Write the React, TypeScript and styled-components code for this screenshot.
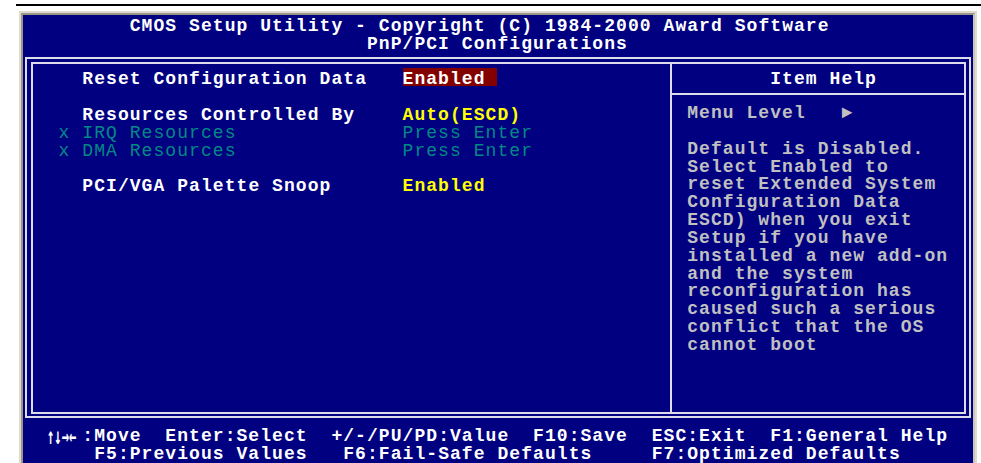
import React from "react"
import styled, { createGlobalStyle } from "styled-components"

// 80x25 text-mode grid
const CELL = 11.86
const ROW = 17.84
const cols = (n: number) => `${(n * CELL).toFixed(2)}px`

const GlobalStyle = createGlobalStyle`
  html, body {
    margin: 0;
    padding: 0;
    background: #ffffff;
  }
`

const Page = styled.div`
  width: 981px;
  height: 463px;
  padding-top: 4px;
  box-sizing: border-box;
  overflow: hidden;
  background: #ffffff;
`

const Rule = styled.div`
  margin-left: 16px;
  height: 2px;
  background: #000000;
`

const Bezel = styled.div`
  margin: 5px 0 0 19px;
  width: 958px;
  height: 460px;
  box-sizing: border-box;
  border-style: solid;
  border-width: 2px 2px 0 2px;
  border-color: #dedacd;
`

// the taller line box drops glyphs onto the middle of each text row
const Screen = styled.div`
  height: 100%;
  box-sizing: border-box;
  border-style: solid;
  border-width: 2px 2px 0 2px;
  border-color: #9a9687 #c9c6bb #9a9687 #9a9687;
  background: #000080;
  display: flex;
  flex-direction: column;
  color: #ffffff;
  font-family: "Liberation Mono", "DejaVu Sans Mono", monospace;
  font-size: 18px;
  font-weight: 700;
  letter-spacing: 1.06px;
  line-height: ${ROW + 5}px;
  white-space: pre;
`

const Header = styled.header`
  display: flex;
  flex-direction: column;
`

const TextLine = styled.div<{ $indent?: number }>`
  height: ${ROW}px;
  padding-left: ${(p) => cols(p.$indent ?? 0)};
`

const Frame = styled.section`
  margin: 6.3px 2px 7.3px 2px;
  height: 361px;
  box-sizing: border-box;
  border: 2px solid #dcdcec;
  padding: 3px 3px 2px 4px;
`

const InnerFrame = styled.div`
  height: 100%;
  box-sizing: border-box;
  border: 2px solid #dcdcec;
  display: flex;
`

const MenuPane = styled.div`
  width: 637px;
  flex: none;
  padding: 4.5px 0 0 25.6px;
  box-sizing: border-box;
  display: flex;
  flex-direction: column;
`

const MenuRow = styled.div`
  height: ${ROW}px;
  display: grid;
  grid-template-columns: ${cols(2)} ${cols(27)} auto;
  align-items: start;
`

type Tone = "white" | "yellow" | "teal" | "selected"

const toneColor: Record<Tone, string> = {
  white: "#ffffff",
  yellow: "#ffff00",
  teal: "#008a84",
  selected: "#ffffff",
}

const Cell = styled.span<{ $tone: Tone }>`
  color: ${(p) => toneColor[p.$tone]};
  font-weight: ${(p) => (p.$tone === "teal" ? 400 : 700)};
  height: ${ROW}px;
`

const Value = styled(Cell)`
  justify-self: start;
  width: ${(p) => (p.$tone === "selected" ? cols(8) : "auto")};
  background: ${(p) => (p.$tone === "selected" ? "#840000" : "transparent")};
`

const HelpPane = styled.aside`
  flex: 1;
  border-left: 2px solid #dcdcec;
  display: flex;
  flex-direction: column;
  color: #c0c0c0;
`

const HelpTitle = styled.div`
  height: 31px;
  padding: 4.5px 0 0 ${(15.2 + 7 * CELL).toFixed(2)}px;
  box-sizing: border-box;
  border-bottom: 2px solid #dcdcec;
  color: #ffffff;
`

const HelpBody = styled.div`
  padding: 7.2px 0 0 15.2px;
  display: flex;
  flex-direction: column;
`

const Footer = styled.footer`
  display: flex;
  flex-direction: column;
`

// cursor keys are drawn tall and narrow, squeezed into four cells
const ArrowCell = styled.span`
  display: inline-block;
  width: ${cols(4)};
  padding-left: 12px;
  box-sizing: border-box;
  vertical-align: top;
`

const Arrows = styled.span`
  display: inline-block;
  font-family: "DejaVu Sans Mono", monospace;
  font-size: 21px;
  letter-spacing: 0;
  transform: scale(0.58, 1.1);
  transform-origin: left center;
`

type Item = {
  label: string
  value: string
  state: "selected" | "normal" | "locked"
}

const items: (Item | null)[] = [
  { label: "Reset Configuration Data", value: "Enabled", state: "selected" },
  null,
  { label: "Resources Controlled By", value: "Auto(ESCD)", state: "normal" },
  { label: "IRQ Resources", value: "Press Enter", state: "locked" },
  { label: "DMA Resources", value: "Press Enter", state: "locked" },
  null,
  { label: "PCI/VGA Palette Snoop", value: "Enabled", state: "normal" },
]

const helpText = [
  "Menu Level   \u25BA",
  "",
  "Default is Disabled.",
  "Select Enabled to",
  "reset Extended System",
  "Configuration Data",
  "ESCD) when you exit",
  "Setup if you have",
  "installed a new add-on",
  "and the system",
  "reconfiguration has",
  "caused such a serious",
  "conflict that the OS",
  "cannot boot",
]

function MenuItem({ item }: { item: Item | null }) {
  if (!item) return <MenuRow />
  const locked = item.state === "locked"
  const valueTone: Tone = locked ? "teal" : item.state === "selected" ? "selected" : "yellow"
  return (
    <MenuRow>
      <Cell $tone="teal">{locked ? "x" : ""}</Cell>
      <Cell $tone={locked ? "teal" : "white"}>{item.label}</Cell>
      <Value $tone={valueTone}>{item.value}</Value>
    </MenuRow>
  )
}

export default function App() {
  return (
    <>
      <GlobalStyle />
      <Page>
        <Rule />
        <Bezel>
          <Screen>
            <Header>
              <TextLine $indent={9}>CMOS Setup Utility - Copyright (C) 1984-2000 Award Software</TextLine>
              <TextLine $indent={29}>PnP/PCI Configurations</TextLine>
            </Header>
            <Frame>
              <InnerFrame>
                <MenuPane>
                  {items.map((item, i) => (
                    <MenuItem key={i} item={item} />
                  ))}
                </MenuPane>
                <HelpPane>
                  <HelpTitle>Item Help</HelpTitle>
                  <HelpBody>
                    {helpText.map((line, i) => (
                      <TextLine key={i}>{line}</TextLine>
                    ))}
                  </HelpBody>
                </HelpPane>
              </InnerFrame>
            </Frame>
            <Footer>
              <TextLine $indent={1}>
                <ArrowCell>
                  <Arrows>{"\u2191\u2193\u2192\u2190"}</Arrows>
                </ArrowCell>
                {":Move  Enter:Select  +/-/PU/PD:Value  F10:Save  ESC:Exit  F1:General Help"}
              </TextLine>
              <TextLine $indent={6}>
                {"F5:Previous Values   F6:Fail-Safe Defaults     F7:Optimized Defaults"}
              </TextLine>
            </Footer>
          </Screen>
        </Bezel>
      </Page>
    </>
  )
}
